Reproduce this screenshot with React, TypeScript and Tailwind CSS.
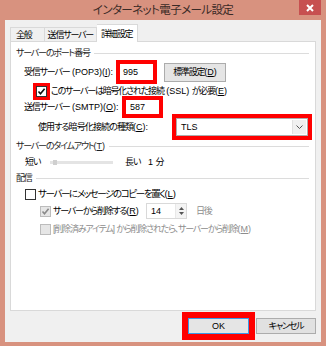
import React from "react";

const font = "font-['Liberation_Sans','Noto_Sans_CJK_JP',sans-serif] [font-feature-settings:'palt']";

// latin runs keep normal spacing; kana/kanji around them are tightened
function L({ children }: { children: React.ReactNode }) {
  return <span className="tracking-normal">{children}</span>;
}

function Check({ checked, disabled }: { checked?: boolean; disabled?: boolean }) {
  return (
    <div
      className={`flex h-[11px] w-[11px] shrink-0 items-center justify-center border ${
        disabled ? "border-[#bcbcbc] bg-[#e6e6e6]" : "border-[#333] bg-white"
      }`}
    >
      {checked && (
        <svg width="9" height="9" viewBox="0 0 9 9">
          <path
            d="M1.5 4.5 L3.5 6.8 L7.6 1.8"
            fill="none"
            stroke={disabled ? "#8a8a8a" : "#111"}
            strokeWidth="1.6"
          />
        </svg>
      )}
    </div>
  );
}

function Header({ children }: { children: React.ReactNode }) {
  return (
    <div className="flex h-[14px] items-center pl-[5px] pr-[6px]">
      <span className="text-[#1e1e1e]">{children}</span>
      <div className="ml-[4px] h-px flex-1 bg-[#dcdcdc]" />
    </div>
  );
}

function RedBox({ className, children }: { className?: string; children: React.ReactNode }) {
  return <div className={`shrink-0 border-[4px] border-[#ff0000] ${className ?? ""}`}>{children}</div>;
}

export default function App() {
  return (
    <div
      className={`flex h-[346px] w-[326px] flex-col whitespace-nowrap bg-[#d8927f] text-[9px] leading-[14px] tracking-[-1.2px] text-black ${font}`}
    >
      {/* title bar */}
      <div className="flex h-[20px] items-start">
        <div className="w-[27px]" />
        <div className="flex-1 pt-[3px] text-center text-[11.5px] leading-[15px] tracking-[-0.6px] text-[#3a2a26]">
          インターネット電子メール設定
        </div>
        <div className="mr-[5px] flex h-[15px] w-[22px] items-center justify-center bg-[#c75050]">
          <svg width="8" height="8" viewBox="0 0 8 8">
            <path d="M1 1 L7 7 M7 1 L1 7" stroke="white" strokeWidth="2" />
          </svg>
        </div>
      </div>

      {/* client area */}
      <div className="mx-[5px] mb-[4px] flex flex-1 flex-col bg-[#f0f0f0] px-[5px] pt-[4px]">
        {/* tabs */}
        <div className="relative z-10 flex h-[17px] items-end">
          <div className="flex h-[14px] items-center border border-b-0 border-[#d9d9d9] bg-[#f0f0f0] pl-[5px] pr-[12px]">
            全般
          </div>
          <div className="flex h-[14px] items-center border border-b-0 border-l-0 border-[#d9d9d9] bg-[#f0f0f0] pl-[3px] pr-[3px]">
            送信サーバー
          </div>
          <div className="-mb-px flex h-[18px] items-center border border-b-0 border-l-0 border-[#d9d9d9] bg-white pl-[4px] pr-[5px]">
            詳細設定
          </div>
        </div>

        {/* panel */}
        <div className="flex h-[270px] flex-col border border-[#d9d9d9] bg-white">
          <div className="mt-[4px]">
            <Header>サーバーのポート番号</Header>
          </div>

          {/* POP3 */}
          <div className="flex h-[24px] items-center">
            <div className="w-[105px] shrink-0 pl-[13px]">
              受信サーバー<L> (POP3)(<u>I</u>):</L>
            </div>
            <RedBox className="h-[24px] w-[41px] bg-white">
              <div className="flex h-full items-center pl-[3px] tracking-normal">995</div>
            </RedBox>
            <div className="ml-[7px] flex h-[19px] w-[62px] items-center justify-center border border-[#acacac] bg-[#e5e5e5]">
              標準設定<L>(<u>D</u>)</L>
            </div>
          </div>

          {/* SSL */}
          <div className="flex h-[14px] items-center">
            <div className="ml-[22px] flex h-[17px] w-[17px] items-center justify-center bg-[#ff0000]">
              <Check checked />
            </div>
            <span className="ml-[1px]">
              このサーバーは暗号化された接続<L> (SSL) </L>が必要<L>(<u>E</u>)</L>
            </span>
          </div>

          {/* SMTP */}
          <div className="flex h-[18px] items-center">
            <div className="w-[111px] shrink-0 pl-[13px]">
              送信サーバー<L> (SMTP)(<u>O</u>):</L>
            </div>
            <RedBox className="h-[22px] w-[41px] bg-white">
              <div className="flex h-full items-center pl-[4px] tracking-normal">587</div>
            </RedBox>
          </div>

          {/* encryption */}
          <div className="flex h-[22px] items-center">
            <div className="w-[161px] shrink-0 pl-[27px] tracking-[-0.9px]">
              使用する暗号化接続の種類<L>(<u>C</u>):</L>
            </div>
            <RedBox className="h-[26px] w-[140px]">
              <div className="flex h-full items-center border border-[#acacac] bg-white">
                <span className="flex-1 pl-[4px] tracking-normal">TLS</span>
                <div className="mr-[1px] flex h-[14px] w-[14px] items-center justify-center border-l border-[#e0e0e0] bg-[#f0f0f0]">
                  <svg width="7" height="4" viewBox="0 0 7 4">
                    <path d="M0.5 0.5 L3.5 3.5 L6.5 0.5" fill="none" stroke="#555" strokeWidth="1" />
                  </svg>
                </div>
              </div>
            </RedBox>
          </div>

          <div className="mt-[1px]">
            <Header>
              サーバーのタイムアウト<L>(<u>T</u>)</L>
            </Header>
          </div>

          {/* slider */}
          <div className="mt-[2px] flex h-[14px] items-center">
            <span className="ml-[14px] w-[25px]">短い</span>
            <div className="relative h-[3px] w-[63px] bg-[#e4e4e4]">
              <div className="absolute left-[3px] top-[-1px] h-[5px] w-[4px] bg-[#cfcfcf]" />
            </div>
            <span className="ml-[12px]">長い</span>
            <span className="ml-[8px] tracking-normal">1 分</span>
          </div>

          <div className="mt-[2px]">
            <Header>配信</Header>
          </div>

          {/* L */}
          <div className="mt-[2px] flex h-[14px] items-center">
            <div className="ml-[14px]">
              <Check />
            </div>
            <span className="ml-[2px] text-[9.5px] tracking-[-1.4px]">
              サーバーにメッセージのコピーを置く<L>(<u>L</u>)</L>
            </span>
          </div>

          {/* R */}
          <div className="mt-[2px] flex h-[16px] items-center">
            <div className="ml-[29px]">
              <Check checked disabled />
            </div>
            <span className="ml-[2px] w-[93px] shrink-0">
              サーバーから削除する<L>(<u>R</u>)</L>
            </span>
            <div className="flex h-[16px] w-[41px] items-center border border-[#d9d9d9] bg-white">
              <span className="flex-1 pl-[4px] tracking-normal">14</span>
              <div className="flex h-full w-[11px] flex-col items-center justify-center gap-[2px] border-l border-[#e8e8e8] bg-[#f4f4f4]">
                <svg width="5" height="3" viewBox="0 0 5 3">
                  <path d="M0 3 L2.5 0 L5 3 Z" fill="#555" />
                </svg>
                <svg width="5" height="3" viewBox="0 0 5 3">
                  <path d="M0 0 L2.5 3 L5 0 Z" fill="#555" />
                </svg>
              </div>
            </div>
            <span className="ml-[9px] text-[#8d8d8d]">日後</span>
          </div>

          {/* M */}
          <div className="mt-[3px] flex h-[14px] items-center">
            <div className="ml-[29px]">
              <Check disabled />
            </div>
            <span className="ml-[2px] text-[#8d8d8d]">
              [削除済みアイテム]<L> </L>から削除されたら、サーバーから削除<L>(<u>M</u>)</L>
            </span>
          </div>
        </div>

        {/* buttons */}
        <div className="mt-px flex justify-end">
          <div className="border-[6px] border-[#ff0000]">
            <div className="flex h-[16px] w-[61px] items-center justify-center border border-[#3c98e6] bg-[#e5e5e5] tracking-normal">
              OK
            </div>
          </div>
          <div className="ml-[1px] mt-[6px] flex h-[16px] w-[60px] items-center justify-center border border-[#acacac] bg-[#e1e1e1]">
            キャンセル
          </div>
        </div>
      </div>
    </div>
  );
}
